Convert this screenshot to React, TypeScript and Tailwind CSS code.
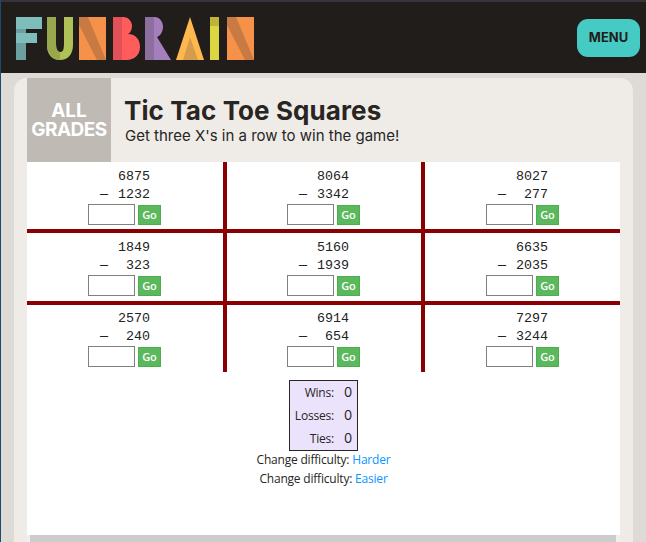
const problems = [
  [['6875', '1232'], ['8064', '3342'], ['8027', '277']],
  [['1849', '323'], ['5160', '1939'], ['6635', '2035']],
  [['2570', '240'], ['6914', '654'], ['7297', '3244']],
];

function Logo() {
  return (
    <svg className="mt-[2px] block" width="240" height="43" viewBox="0 0 240 43">
      {/* F */}
      <path d="M0 0H10V43H0Z" fill="#6c9f9f" />
      <path d="M0 0H26V12H0Z M0 16H21V26H0Z" fill="#7fbcbc" />
      {/* U */}
      <path d="M31 0H40V26C40 33 41 35 44 35C47 35 48 33 48 26V0H57V28C57 37 52 43 44 43C36 43 31 37 31 28Z" fill="#aec257" />
      <path d="M31 0H40V26C40 31 41 34 44 35V43C36 43 31 37 31 28Z" fill="#99a84c" />
      {/* N */}
      <path d="M63 0H90V43H63Z" fill="#f59149" />
      <path d="M63 0H72L90 43H81L63 8Z" fill="#c87a42" />
      {/* B */}
      <path d="M97 0H107C113 0 116 5 116 9C116 13 114 16 112 17C120 17 124 23 124 30C124 38 118 43 111 43H97Z" fill="#ff5c5c" />
      <path d="M97 0H106V43H97Z" fill="#e15157" />
      {/* R */}
      <path d="M129 0H138C144 0 147 5 147 10C147 15 144 19 141 20L155 43H129Z" fill="#a47fbc" />
      <path d="M129 0H138V43H129Z" fill="#8c6f9f" />
      {/* A */}
      <path d="M160 43L174 0L188 43Z" fill="#ffb84d" />
      <path d="M167 43L174 20L182 43Z" fill="#d69c4d" />
      {/* I */}
      <path d="M194 0H203V43H194Z" fill="#ddd643" />
      <path d="M194 0H203V9H194Z" fill="#bfb438" />
      {/* N */}
      <path d="M211 0H238V43H211Z" fill="#f59149" />
      <path d="M211 0H220L238 43H229L211 8Z" fill="#c87a42" />
    </svg>
  );
}

function Problem({ top, bottom }: { top: string; bottom: string }) {
  return (
    <div className="flex flex-col items-center">
      <div className="mt-[5px] w-[73px] pl-[12px] pr-[11px] text-right font-['Liberation_Mono',monospace] text-[13.33px] leading-[18px] text-[#222]">
        <div>{top}</div>
        <div className="flex justify-between">
          <span>—</span>
          <span>{bottom}</span>
        </div>
      </div>
      <div className="flex items-start gap-[3px]">
        <input className="h-[21px] w-[47px] border border-[#808080] bg-white" />
        <button className="mt-[1px] h-5 w-[23px] border border-[#4cae4c] bg-[#5cb85c] font-['Open_Sans',sans-serif] text-[11px] font-semibold text-white">
          Go
        </button>
      </div>
    </div>
  );
}

export default function App() {
  return (
    <div className="flex h-[542px] w-[646px] flex-col overflow-hidden border-l border-[#1d4a72] bg-[#dedbd6]">
      <header className="flex h-[73px] shrink-0 items-center justify-between border-t-2 border-[#33353a] bg-[#211d1b] pl-[15px] pr-[6px]">
        <Logo />
        <button className="h-[38px] w-[63px] rounded-[11px] bg-[#45cbc4] font-['Inter',sans-serif] text-[13px] font-bold text-[#211d1b]">
          MENU
        </button>
      </header>
      <main className="ml-[13px] mt-[5px] flex w-[619px] flex-1 flex-col rounded-t-[13px] bg-[#efece7] px-[13px]">
        <div className="flex h-[84px] shrink-0">
          <div className="flex w-[84px] flex-col items-center justify-center bg-[#bfbab4] font-['Inter',sans-serif] text-[19px] font-bold leading-[19px] text-white">
            <div>ALL</div>
            <div className="tracking-[-0.5px]">GRADES</div>
          </div>
          <div className="pl-[13px] pt-[17px] text-[#282523]">
            <h1 className="font-['Inter',sans-serif] text-[26px] font-bold leading-[32px] tracking-[0.1px]">Tic Tac Toe Squares</h1>
            <p className="pl-[1px] font-['Inter',sans-serif] text-[15px] leading-[17px]">Get three X's in a row to win the game!</p>
          </div>
        </div>
        <div className="flex flex-1 flex-col">
          <div className="flex flex-1 flex-col bg-white">
            <div className="grid h-[210px] w-full shrink-0 grid-cols-[200px_198px_195px] grid-rows-[71px_72px_67px]">
              {problems.flat().map(([top, bottom], i) => (
                <div
                  key={i}
                  className={`${i % 3 < 2 ? 'border-r-4 pr-px' : ''} ${i < 6 ? 'border-b-4 pt-px' : ''} border-[#8b0000]`}
                >
                  <Problem top={top} bottom={bottom} />
                </div>
              ))}
            </div>
            <div className="mt-2 flex flex-col items-center font-['Open_Sans',sans-serif] text-[12px] leading-[19px] tracking-[-0.2px] text-[#282523]">
              <div className="mb-[-1px] flex h-[71px] w-[69px] flex-col justify-center gap-[4px] border border-[#282523] bg-[#ebe3fb] pr-[5px]">
                {['Wins', 'Losses', 'Ties'].map((label) => (
                  <div key={label} className="flex justify-end gap-[10px]">
                    <span>{label}:</span>
                    <span className="font-['Inter',sans-serif] text-[13px]">0</span>
                  </div>
                ))}
              </div>
              <div>Change difficulty: <span className="text-[#0a95ff]">Harder</span></div>
              <div>Change difficulty: <span className="text-[#0a95ff]">Easier</span></div>
            </div>
          </div>
          <div className="bg-[#f0eeee] pl-[3px] pr-[4px]">
            <div className="h-[7px] bg-[#cccccc]" />
          </div>
        </div>
      </main>
    </div>
  );
}
